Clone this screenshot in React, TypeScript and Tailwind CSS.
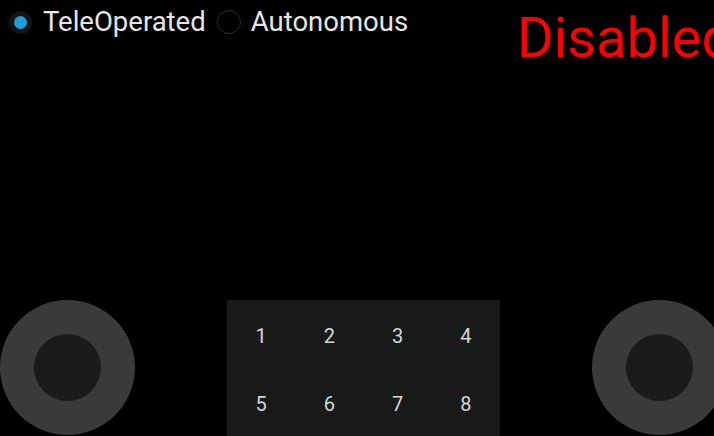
import React from "react";

function Joystick() {
  return (
    <div className="w-[135px] h-[135px] shrink-0 rounded-full bg-[#3a3a3a] flex items-center justify-center">
      <div className="w-[67px] h-[67px] rounded-full bg-[#1b1b1b]" />
    </div>
  );
}

export default function App() {
  const keys = ["1", "2", "3", "4", "5", "6", "7", "8"];
  return (
    <div
      className="w-[714px] h-[436px] bg-black overflow-hidden flex flex-col"
      style={{ fontFamily: "Roboto, 'Noto Sans', sans-serif" }}
    >
      <div className="h-[300px] shrink-0 flex items-start">
        <div className="flex items-center h-[44px] pl-[9px]">
          <div className="w-[23px] h-[23px] rounded-full bg-[#141414] flex items-center justify-center">
            <div className="w-[13px] h-[13px] rounded-full bg-[#1d9ed8]" />
          </div>
          <span className="ml-[11px] text-[27.5px] leading-none text-[#e6e6e6]">TeleOperated</span>
          <div className="ml-[11px] w-[24px] h-[24px] rounded-full border border-[#2e2e2e]" />
          <span className="ml-[10px] text-[27.5px] leading-none text-[#e6e6e6]">Autonomous</span>
        </div>
        <div className="ml-auto shrink-0 whitespace-nowrap text-[56px] leading-none text-[#ff0000] mt-[10px] w-[197px]">
          Disabled
        </div>
      </div>
      <div className="flex items-start shrink-0">
        <Joystick />
        <div className="ml-[92px] w-[273px] h-[140px] shrink-0 bg-[#171a18] grid grid-cols-4 grid-rows-[68px_68px] pt-[2px]">
          {keys.map((k) => (
            <div key={k} className="flex items-center justify-center text-[20px] text-[#d6d6d6]">
              {k}
            </div>
          ))}
        </div>
        <div className="ml-[92px]">
          <Joystick />
        </div>
      </div>
    </div>
  );
}
